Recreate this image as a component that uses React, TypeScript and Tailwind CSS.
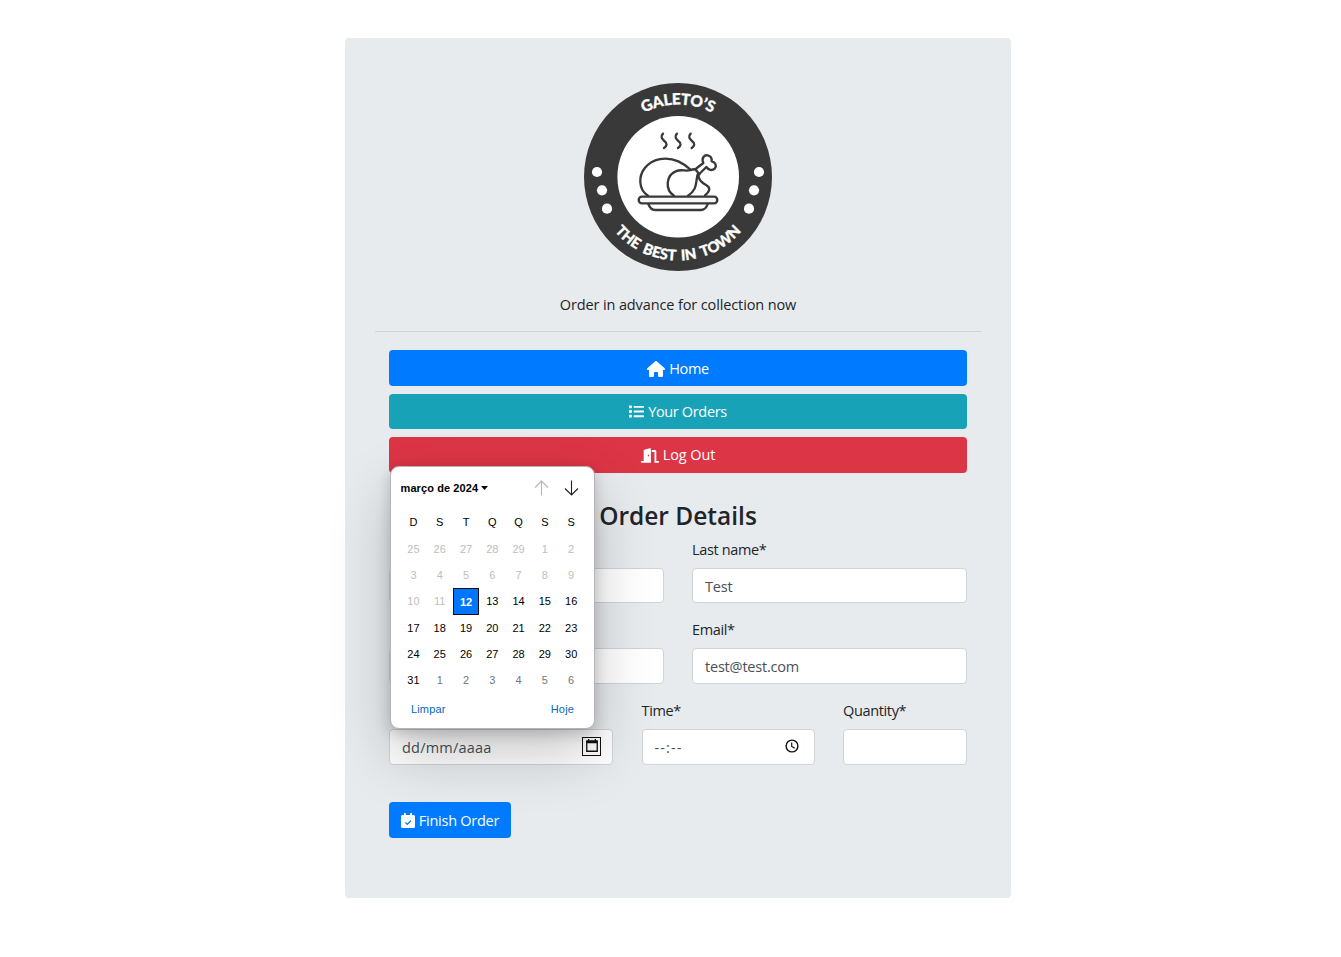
import type { ReactNode } from 'react';
import { FaList, FaDoorOpen } from 'react-icons/fa';
import { FaHouse } from 'react-icons/fa6';

const weekdays = ['D', 'S', 'T', 'Q', 'Q', 'S', 'S'];

type Tone = 'past' | 'current' | 'next' | 'selected';

const toneClass: Record<Tone, string> = {
  past: 'text-[#bdbdbd]',
  current: 'text-black',
  next: 'text-[#757575]',
  selected: '-mt-px border border-[#101010] bg-[#0075ff] pt-[2px] font-bold text-white',
};

const days: { n: number; tone: Tone }[] = [
  ...[25, 26, 27, 28, 29].map((n) => ({ n, tone: 'past' as Tone })),
  ...Array.from({ length: 31 }, (_, i) => {
    const n = i + 1;
    const tone: Tone = n < 12 ? 'past' : n === 12 ? 'selected' : 'current';
    return { n, tone };
  }),
  ...[1, 2, 3, 4, 5, 6].map((n) => ({ n, tone: 'next' as Tone })),
];

function Logo() {
  return (
    <svg className="size-[188px]" viewBox="0 0 188 188" fill="none">
      <circle cx="94" cy="94" r="94" fill="#393939" />
      <circle cx="94.2" cy="93.8" r="60.8" fill="#fff" />
      <g fill="#fff">
        <circle cx="13" cy="89" r="5.1" />
        <circle cx="18" cy="107.3" r="5.1" />
        <circle cx="23" cy="125.7" r="5.1" />
        <circle cx="175" cy="89" r="5.1" />
        <circle cx="170" cy="107.3" r="5.1" />
        <circle cx="165" cy="125.7" r="5.1" />
      </g>
      <defs>
        <path id="arc-top" d="M21.500 94 A72.500 72.500 0 0 1 166.500 94" />
        <path id="arc-bottom" d="M10.500 94 A83.500 83.500 0 0 0 177.500 94" />
      </defs>
      <g fill="#fff" stroke="#fff" strokeWidth=".3" fontFamily="Lato, sans-serif" fontWeight="900" fontSize="15.500" textAnchor="middle">
        <text textLength="71">
          <textPath href="#arc-top" startOffset="50%" textLength="71">GALETO’S</textPath>
        </text>
        <text fontSize="14.800" wordSpacing="2.500" textLength="144">
          <textPath href="#arc-bottom" startOffset="50%" textLength="144">THE BEST IN TOWN</textPath>
        </text>
      </g>
      <g transform="translate(40 37) scale(.3333)" stroke="#393939" strokeWidth="7" strokeLinecap="round" strokeLinejoin="round">
        <path d="M117 41C108 50 114 57 121 63C131 70 129 78 120 84" />
        <path d="M159 41C150 50 156 57 163 63C173 70 171 78 162 84" />
        <path d="M200 41C191 50 197 57 204 63C214 70 212 78 203 84" />
        <path d="M72 227C42 208 44 168 62 145C85 115 127 109 163 124C178 131 190 139 201 150" />
        <path d="M150 227C122 209 126 166 155 154C175 145 187 158 207 148" />
        <path d="M221 163C214 190 221 208 192 227" />
        <path d="M208 149L215 147L238 129C231 114 242 104 251 106C260 108 264 115 263 124C275 126 279 138 272 146C264 153 253 150 247 141L226 162" />
        <path d="M214 148L226 163L221 170" />
        <path d="M224 170C227 184 237 190 246 195C261 203 258 214 243 226" />
        <rect x="44" y="230" width="236" height="20" rx="10" fill="#f7f7f7" />
        <path d="M73 252C77 263 84 270 94 270H230C241 270 248 262 251 252" />
      </g>
    </svg>
  );
}

function Label({ children }: { children?: ReactNode }) {
  return <div className="h-[22px] text-[14.5px] leading-[22px] tracking-[-0.35px] whitespace-nowrap">{children}</div>;
}

type FieldProps = { label?: string; value?: string; icon?: ReactNode; className: string; box?: string };

function Field({ label, value, icon, className, box = 'h-9 tracking-[-0.2px]' }: FieldProps) {
  return (
    <div className={className}>
      <Label>{label}</Label>
      <div className={`mt-[7px] flex items-center justify-between rounded-[4px] border border-[#ced4da] bg-white pr-[11px] pl-[12px] text-[14.5px] text-[#495057] ${box}`}>
        <span className="pt-[2px]">{value}</span>
        {icon}
      </div>
    </div>
  );
}

function CalendarGlyph() {
  return (
    <span className="-mt-[2px] flex size-[19px] items-center justify-center border border-[#101010]">
      <svg className="-mt-px h-[13px] w-3" viewBox="0 0 12 13" fill="none">
        <path d="M.75 2.250h10.500v10H.75z" stroke="#101010" strokeWidth="1.300" />
        <path d="M.5 1.500h11v2.700H.5zM2 0h1.300v2H2zM8.700 0H10v2H8.700z" fill="#101010" />
      </svg>
    </span>
  );
}

function ClockGlyph() {
  return (
    <svg className="mr-[4px] -mt-[2px] size-[14px]" viewBox="0 0 14 14" fill="none" stroke="#101010">
      <circle cx="7" cy="7" r="5.900" strokeWidth="1.400" />
      <path d="M6.700 3.500v4l3 1.800" strokeWidth="1.200" />
    </svg>
  );
}

function CalendarCheck() {
  return (
    <svg className="h-[15px] w-[14px]" viewBox="0 0 14 15" fill="none">
      <path d="M1.500 2H3V.8a.8.8 0 0 1 1.900 0V2h4.200V.8a.8.8 0 0 1 1.900 0V2h1.500A1.500 1.500 0 0 1 14 3.500v10a1.500 1.500 0 0 1-1.500 1.500h-11A1.500 1.500 0 0 1 0 13.500v-10A1.500 1.500 0 0 1 1.500 2z" fill="#fff" />
      <path d="M0 5.100h14" stroke="#007bff" strokeOpacity=".18" strokeWidth=".8" />
      <path d="M4.300 9.300l2 2L10 7.700" stroke="#007bff" strokeWidth="1.200" />
    </svg>
  );
}

function DatePicker() {
  return (
    <div className="absolute top-[428px] left-[45px] h-[263px] w-[205px] rounded-[9px] border border-[#b4b4b8] bg-white font-['Liberation_Sans',Arial,sans-serif] text-[11px] text-black shadow-[0_5px_14px_rgba(0,0,0,0.18),0_25px_58px_rgba(0,0,0,0.22)]">
      <div className="flex h-[42px] items-center pr-[15px] pl-[9.500px]">
        <span className="pt-px font-bold tracking-[0.1px] whitespace-nowrap">março de 2024</span>
        <svg className="ml-[3px] h-1 w-[7px]" viewBox="0 0 7 4">
          <path d="M0 0h7L3.500 4z" />
        </svg>
        <svg className="ml-auto h-4 w-[15px]" viewBox="0 0 15 16" fill="none" stroke="#b5b5b5" strokeWidth="1.100">
          <path d="M7.500 15.500V1M1 7.500L7.500 1L14 7.500" />
        </svg>
        <svg className="ml-[15px] h-4 w-[15px]" viewBox="0 0 15 16" fill="none" stroke="#202020" strokeWidth="1.100">
          <path d="M7.500 .5V15M1 8.500L7.500 15L14 8.500" />
        </svg>
      </div>
      <div className="ml-[9.300px] grid h-[27px] w-[184px] grid-cols-7 items-center text-center">
        {weekdays.map((d, i) => (
          <span key={i}>{d}</span>
        ))}
      </div>
      <div className="ml-[9.300px] grid h-[157.500px] w-[184px] grid-cols-7 grid-rows-6">
        {days.map((d, i) => (
          <span key={i} className={`flex items-center justify-center ${toneClass[d.tone]}`}>
            {d.n}
          </span>
        ))}
      </div>
      <div className="flex justify-between pt-[9px] pr-[20px] pl-[20px] leading-[13px] tracking-[0.15px] text-[#0067c0]">
        <span>Limpar</span>
        <span>Hoje</span>
      </div>
    </div>
  );
}

const button = 'flex items-center justify-center gap-[4px] rounded-[4px] text-[14.5px] tracking-[-0.35px] text-white';

export default function App() {
  return (
    <div className="h-[957px] w-full overflow-hidden bg-white pt-[38px] pl-[345px] font-['Open_Sans','Noto_Sans',sans-serif] text-[#212529]">
      <main className="relative h-[860px] w-[666px] rounded-[4px] bg-[#e8ebee] px-[30px] pt-[45px]">
        <div className="flex justify-center">
          <Logo />
        </div>
        <p className="mt-[23px] text-center text-[14.5px] leading-[22px] tracking-[-0.12px]">Order in advance for collection now</p>
        <hr className="mt-[15px] border-[#cfd2d5]" />
        <div className="px-[14px] pt-[18px]">
          <nav className="flex flex-col gap-2">
            <button className={`${button} h-9 bg-[#007bff]`}>
              <FaHouse className="mt-px h-4 w-[18px]" />
              <span className="pt-[2px]">Home</span>
            </button>
            <button className={`${button} h-[35px] bg-[#17a2b8]`}>
              <FaList className="size-[15px]" />
              <span>Your Orders</span>
            </button>
            <button className={`${button} h-9 bg-[#dc3545]`}>
              <FaDoorOpen className="h-[15px] w-[18px]" />
              <span className="tracking-[-0.1px]">Log Out</span>
            </button>
          </nav>
          <h1 className="mt-[27px] h-8 text-center text-[24.500px] leading-8 font-semibold">Order Details</h1>
          <div className="mt-[7px] flex gap-7">
            <Field className="w-[275px]" box="h-[35px]" />
            <Field className="w-[275px]" box="h-[35px] tracking-[-0.2px]" label="Last name*" value="Test" />
          </div>
          <div className="mt-[16px] flex gap-7">
            <Field className="w-[275px]" />
            <Field className="w-[275px]" label="Email*" value="test@test.com" />
          </div>
          <div className="mt-[16px] flex justify-between">
            <Field className="w-[224px]" box="h-9 tracking-[0.2px]" value="dd/mm/aaaa" icon={<CalendarGlyph />} />
            <Field className="w-[173px]" box="h-9 tracking-[1.1px]" label="Time*" value="--:--" icon={<ClockGlyph />} />
            <Field className="w-[124px]" label="Quantity*" />
          </div>
          <button className={`${button} mt-[37px] h-9 w-[122px] bg-[#007bff]`}>
            <CalendarCheck />
            <span className="pt-[2px] tracking-[-0.25px]">Finish Order</span>
          </button>
        </div>
        <DatePicker />
      </main>
    </div>
  );
}
